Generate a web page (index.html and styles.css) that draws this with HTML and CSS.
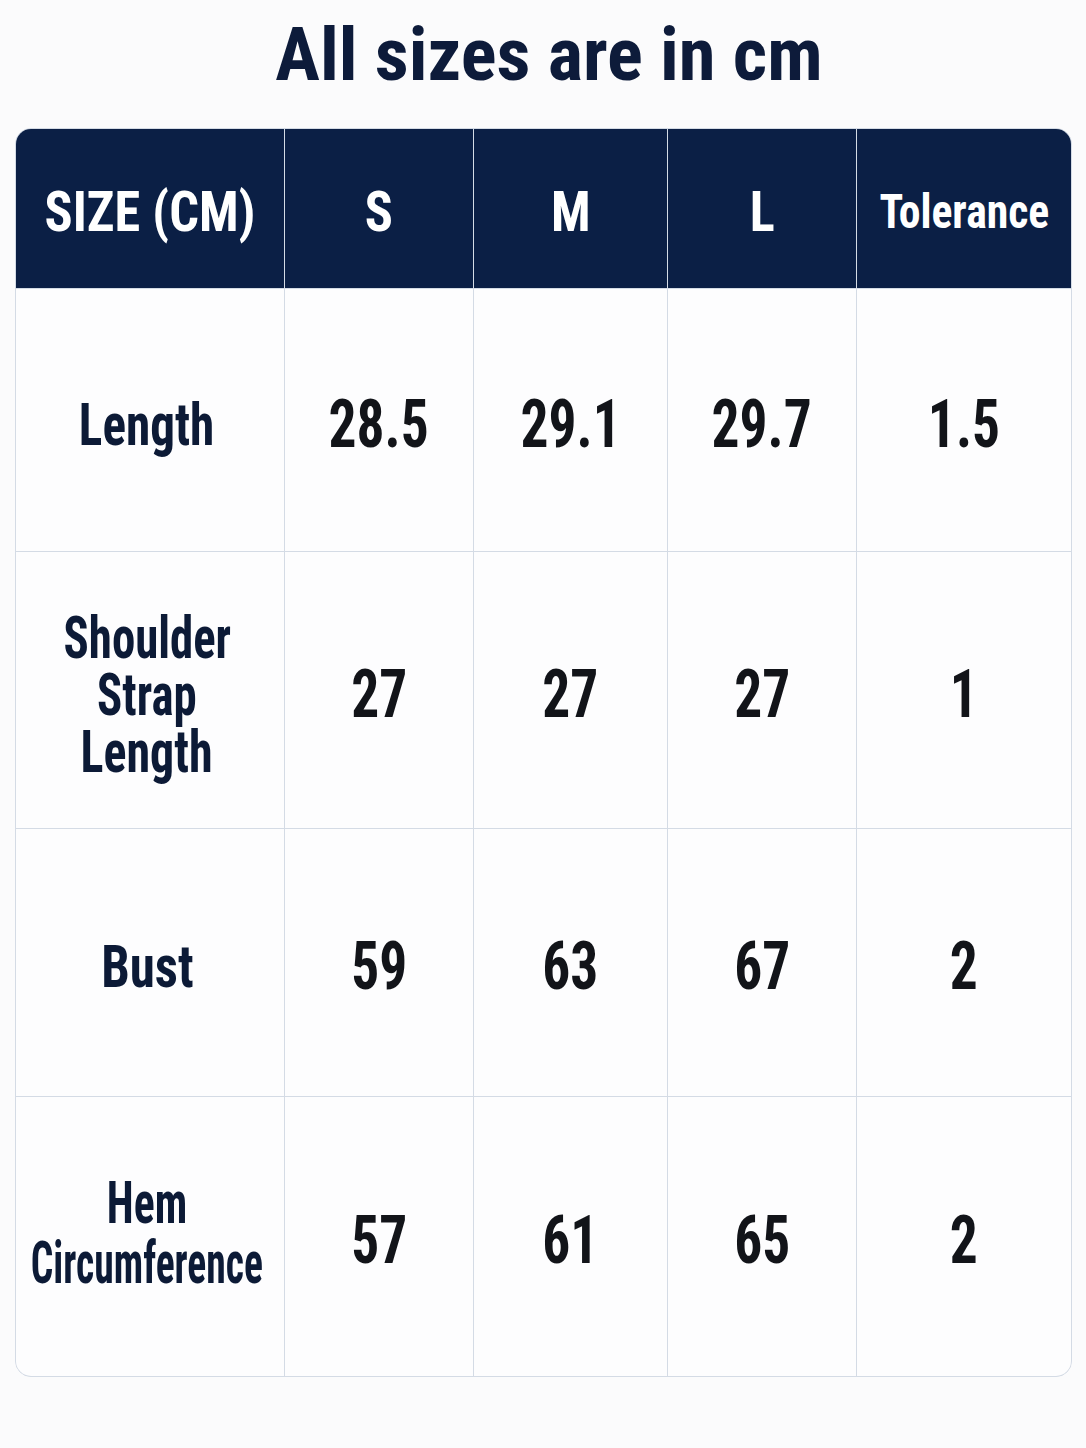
FILE: index.html
```html
<!DOCTYPE html>
<html lang="en">
<head>
<meta charset="utf-8">
<title>Size chart</title>
<link rel="stylesheet" href="styles.css">
</head>
<body>
<main class="page">
  <h1 class="title"><span class="squeeze-title">All sizes are in cm</span></h1>
  <div class="chart">
    <div class="cell head"><span class="sq-head">SIZE (CM)</span></div>
    <div class="cell head"><span class="sq-head">S</span></div>
    <div class="cell head"><span class="sq-head">M</span></div>
    <div class="cell head"><span class="sq-head">L</span></div>
    <div class="cell head head-small"><span class="sq-tol">Tolerance</span></div>

    <div class="cell label"><div class="lines"><span class="ln w82">Length</span></div></div>
    <div class="cell num"><span class="sq-num">28.5</span></div>
    <div class="cell num"><span class="sq-num">29.1</span></div>
    <div class="cell num"><span class="sq-num">29.7</span></div>
    <div class="cell num"><span class="sq-num">1.5</span></div>

    <div class="cell label"><div class="lines"><span class="ln w78">Shoulder</span><span class="ln w78">Strap</span><span class="ln w80">Length</span></div></div>
    <div class="cell num"><span class="sq-num">27</span></div>
    <div class="cell num"><span class="sq-num">27</span></div>
    <div class="cell num"><span class="sq-num">27</span></div>
    <div class="cell num"><span class="sq-num">1</span></div>

    <div class="cell label"><div class="lines"><span class="ln w85">Bust</span></div></div>
    <div class="cell num"><span class="sq-num">59</span></div>
    <div class="cell num"><span class="sq-num">63</span></div>
    <div class="cell num"><span class="sq-num">67</span></div>
    <div class="cell num"><span class="sq-num">2</span></div>

    <div class="cell label label-hem"><div class="lines lines-wide"><span class="ln w73">Hem</span><span class="ln w66">Circumference</span></div></div>
    <div class="cell num"><span class="sq-num">57</span></div>
    <div class="cell num"><span class="sq-num">61</span></div>
    <div class="cell num"><span class="sq-num">65</span></div>
    <div class="cell num"><span class="sq-num">2</span></div>
  </div>
</main>
</body>
</html>
```
FILE: styles.css
```css
html, body {
  margin: 0;
  padding: 0;
  background: #fbfbfc;
}
body {
  font-family: "Roboto Condensed", Roboto, "Liberation Sans", sans-serif;
  font-weight: 700;
}
.page {
  width: 1086px;
  height: 1448px;
  padding: 18px 14px 0 15px;
  box-sizing: border-box;
}
.title {
  margin: 0 0 0 11px;
  height: 110px;
  font-size: 74px;
  line-height: 74px;
  font-weight: 700;
  text-align: center;
  color: #0d1b3a;
}
.squeeze-title {
  display: inline-block;
  transform: scaleX(1.01);
}
.chart {
  display: grid;
  grid-template-columns: 268px 188px 193px 188px 214px;
  grid-template-rows: 159px 262px 276px 267px 279px;
  gap: 1px;
  width: 1057px;
  box-sizing: border-box;
  background: #d4dbe5;
  border: 1px solid #d4dbe5;
  border-radius: 16px;
  overflow: hidden;
}
.cell {
  display: flex;
  align-items: center;
  justify-content: center;
  text-align: center;
  background: #fdfdfe;
}
.head {
  background: #0b1f45;
  color: #ffffff;
  font-size: 55px;
  padding-top: 6px;
  box-sizing: border-box;
}
.head-small {
  font-size: 48px;
}
.sq-head {
  display: inline-block;
  transform: scaleX(0.95);
}
.sq-tol {
  display: inline-block;
  transform: scaleX(0.91);
}
.label {
  color: #0c1a36;
  font-size: 60px;
  line-height: 57px;
  padding: 8px 6px 0 0;
  box-sizing: border-box;
}
.label-hem {
  line-height: 60px;
  padding: 0 6px 7px 0;
}
.lines {
  display: flex;
  flex-direction: column;
  align-items: center;
}
.ln {
  display: block;
  white-space: nowrap;
}
.w66 { transform: scaleX(0.66); }
.w73 { transform: scaleX(0.73); }
.w78 { transform: scaleX(0.78); }
.w80 { transform: scaleX(0.80); }
.w82 { transform: scaleX(0.82); }
.w85 { transform: scaleX(0.85); }
.num {
  color: #121419;
  font-size: 66px;
  padding-top: 8px;
  box-sizing: border-box;
}
.sq-num {
  display: inline-block;
  transform: scaleX(0.84);
}
```
